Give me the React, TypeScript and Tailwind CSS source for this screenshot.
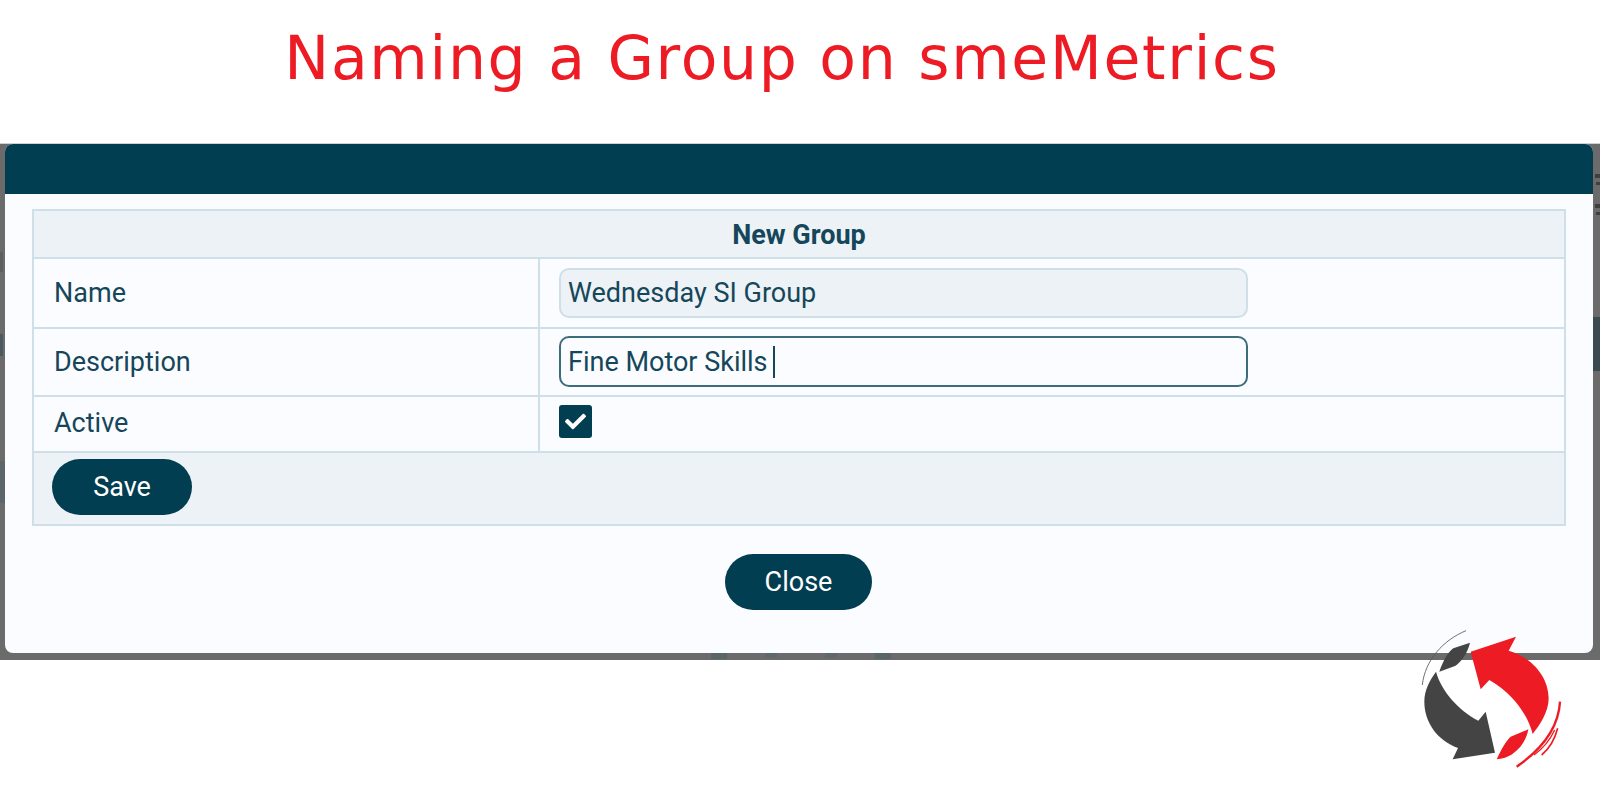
import { FaCheck } from "react-icons/fa";

const border = "border-[#cfdfe8]";

function Logo() {
  return (
    <svg
      className="absolute left-[1380px] top-[620px] h-[180px] w-[220px]"
      viewBox="0 0 660 540"
      aria-label="logo"
    >
      <path d="M272 95 L408 50 L386 92 C450 110 505 165 506 235 C506 275 480 315 458 342 C445 290 405 225 328 180 L302 208 Z" fill="#ed1c24" />
      <path d="M350 418 C365 385 380 360 392 350 L445 328 C440 360 420 385 400 400 C385 412 365 417 350 418 Z" fill="#ed1c24" />
      <path d="M540 245 C536 320 490 385 410 440" fill="none" stroke="#ed1c24" strokeWidth="7" />
      <path d="M533 325 C525 355 510 385 485 405" fill="none" stroke="#ed1c24" strokeWidth="5" />
      <path d="M524 330 C510 360 490 385 462 405" fill="none" stroke="#ed1c24" strokeWidth="4" />
      <path d="M345 398 L218 418 L234 384 C170 360 133 305 133 245 C133 210 150 180 168 155 C185 215 235 270 295 302 L317 275 Z" fill="#444444" />
      <path d="M178 155 C190 120 205 95 220 85 L270 68 C262 100 245 125 225 138 Z" fill="#444444" />
      <path d="M127 195 C135 120 190 60 258 32" fill="none" stroke="#555555" strokeWidth="2.5" />
    </svg>
  );
}

export default function App() {
  return (
    <div className="relative h-[800px] w-[1600px] overflow-hidden bg-white font-['Roboto',sans-serif] text-[27px] text-[#15465a]">
      <div className="flex h-[143px] justify-center pt-[18px] pr-[36px]">
        <h1 className="font-['DejaVu_Sans',sans-serif] text-[60px] leading-[80px] font-normal tracking-[1.7px] text-[#ed1c24]">
          Naming a Group on smeMetrics
        </h1>
      </div>

      <div className="flex h-[517px] border-t border-[#d0d0d0] bg-[#6b6b6b]">
        <div className="flex w-[5px] flex-col">
          <div className="mt-[108px] h-[20px] w-[3px] bg-[#5e5e5e]" />
          <div className="mt-[62px] h-[22px] w-[3px] bg-[#4c5a5f]" />
          <div className="mt-[105px] h-[42px] w-[5px] bg-[#5c666a]" />
        </div>

        <div className="flex w-[1588px] flex-col">
          <div className="flex h-[509px] flex-col overflow-hidden rounded-[8px] bg-[#fafcff]">
            <div className="h-[50px] shrink-0 bg-[#023e51]" />

            <div className="px-[27px] pt-[15px]">
              <div className={`w-[1534px] border-2 ${border}`}>
                <div className={`flex h-[48px] items-center justify-center border-b-2 pt-[2px] ${border} bg-[#edf2f6] font-bold`}>
                  New Group
                </div>

                <div className={`flex h-[70px] border-b-2 ${border}`}>
                  <div className={`flex w-[506px] items-center border-r-2 ${border} pl-[20px]`}>Name</div>
                  <div className="flex flex-1 items-center pl-[19px]">
                    <div className={`flex h-[50px] w-[689px] items-center rounded-[10px] border-2 ${border} bg-[#edf2f6] pl-[7px]`}>
                      Wednesday SI Group
                    </div>
                  </div>
                </div>

                <div className={`flex h-[68px] border-b-2 ${border}`}>
                  <div className={`flex w-[506px] items-center border-r-2 ${border} pl-[20px]`}>Description</div>
                  <div className="flex flex-1 items-center pb-[2px] pl-[19px]">
                    <div className="flex h-[51px] w-[689px] items-center rounded-[10px] border-2 border-[#3d6c7d] pl-[7px] pt-[2px]">
                      Fine Motor Skills
                      <span className="ml-[5px] h-[32px] w-[2px] bg-[#15465a]" />
                    </div>
                  </div>
                </div>

                <div className={`flex h-[56px] border-b-2 ${border}`}>
                  <div className={`flex w-[506px] items-center border-r-2 pb-[2px] ${border} pl-[20px]`}>Active</div>
                  <div className="flex flex-1 items-center pl-[19px]">
                    <div className="mb-[6px] flex h-[33px] w-[33px] items-center justify-center rounded-[3px] bg-[#023e51] text-white">
                      <FaCheck className="h-[21px] w-[21px]" />
                    </div>
                  </div>
                </div>

                <div className="flex h-[71px] bg-[#edf2f6] pl-[18px] pt-[6px]">
                  <button className="h-[56px] w-[140px] rounded-full bg-[#023e51] pt-[1px] text-white">Save</button>
                </div>
              </div>

              <div className="mt-[28px] flex justify-center pr-[1px]">
                <button className="h-[56px] w-[147px] rounded-full bg-[#023e51] text-white">Close</button>
              </div>
            </div>
          </div>

          <div className="flex h-[7px] pl-[706px]">
            <div className="h-[6px] w-[16px] bg-[#5a6568]" />
            <div className="ml-[38px] h-[5px] w-[12px] bg-[#5f686b]" />
            <div className="ml-[48px] h-[5px] w-[12px] bg-[#5f686b]" />
            <div className="ml-[38px] h-[6px] w-[16px] bg-[#5a6568]" />
          </div>
        </div>

        <div className="flex w-[7px] flex-col">
          <div className="mt-[30px] ml-[2px] h-[4px] w-[5px] bg-[#3f3f3f]" />
          <div className="mt-[4px] ml-[3px] h-[3px] w-[4px] bg-[#3f3f3f]" />
          <div className="mt-[19px] ml-[2px] h-[4px] w-[5px] bg-[#3f3f3f]" />
          <div className="mt-[4px] ml-[3px] h-[3px] w-[4px] bg-[#3f3f3f]" />
          <div className="mt-[102px] h-[54px] w-[7px] bg-[#3b4a50]" />
        </div>
      </div>

      <Logo />
    </div>
  );
}
